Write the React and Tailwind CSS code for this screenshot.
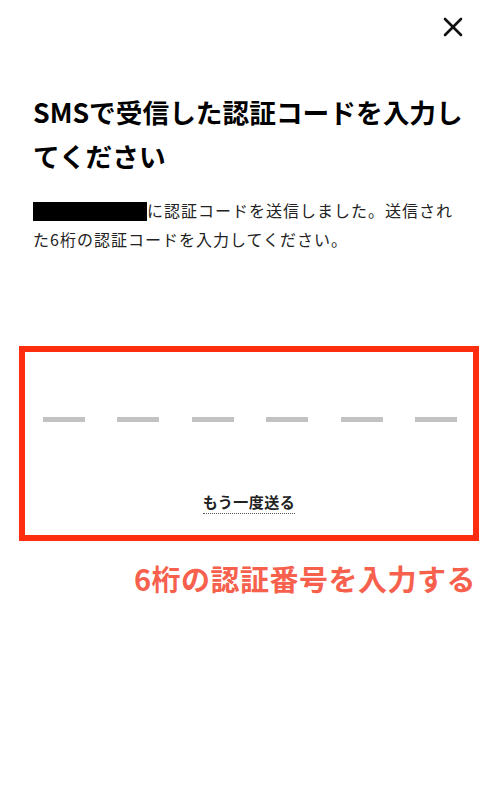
import React from "react";

export default function App() {
  const jp = { fontFamily: '"Noto Sans CJK JP", "Noto Sans", sans-serif' };
  return (
    <div className="w-[500px] h-[805px] bg-white overflow-hidden text-black" style={jp}>
      <div className="h-[54px] flex items-center justify-end pr-[37px]">
        <svg width="20" height="20" viewBox="0 0 20 20" fill="none" stroke="#111" strokeWidth="2.6" strokeLinecap="round">
          <line x1="2" y1="2" x2="18" y2="18" />
          <line x1="18" y1="2" x2="2" y2="18" />
        </svg>
      </div>
      <h1 className="mt-[36px] pl-[33px] pr-[20px] text-[26.7px] leading-[44px] font-bold tracking-[0px]">
        SMSで受信した認証コードを入力し<br />てください
      </h1>
      <p className="mt-[18px] pl-[33px] text-[16px] leading-[29px] tracking-[1px] text-[#222]">
        <span className="inline-block align-middle w-[114px] h-[19px] bg-black mr-0 -mt-[3px]"></span>
        に認証コードを送信しました。送信され<br />た6桁の認証コードを入力してください。
      </p>
      <div className="mt-[92px] ml-[19px] w-[460px] h-[195px] border-[6px] border-[#ff2d0f]">
        <div className="mt-[65px] flex justify-between pl-[18px] pr-[16px]">
          {[0, 1, 2, 3, 4, 5].map((i) => (
            <div key={i} className="w-[42px] h-[5px] bg-[#c2c2c2]"></div>
          ))}
        </div>
        <div className="mt-[70px] flex justify-center">
          <span className="text-[15px] leading-[20px] font-bold tracking-[0.5px] text-[#222] border-b border-dotted border-[#555] pb-[1px]">
            もう一度送る
          </span>
        </div>
      </div>
      <div className="mt-[17px] pr-[24px] text-right text-[29px] leading-[40px] font-bold tracking-[0.5px] text-[#f6604c]">
        6桁の認証番号を入力する
      </div>
    </div>
  );
}
